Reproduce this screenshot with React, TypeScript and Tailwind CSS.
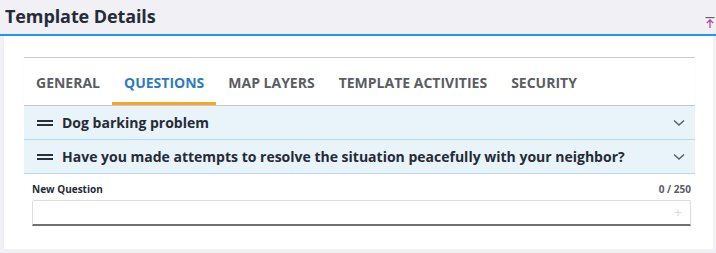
import React from "react";

const TABS = ["GENERAL", "QUESTIONS", "MAP LAYERS", "TEMPLATE ACTIVITIES", "SECURITY"];

const QUESTIONS = [
    "Dog barking problem",
    "Have you made attempts to resolve the situation peacefully with your neighbor?",
];

const Handle = () => (
    <svg width="16" height="8" viewBox="0 0 16 8" className="shrink-0">
        <rect x="0" y="1" width="16" height="2" fill="#2b3038" />
        <rect x="0" y="5" width="16" height="2" fill="#2b3038" />
    </svg>
);

const Chevron = () => (
    <svg width="12" height="8" viewBox="0 0 12 8" className="shrink-0">
        <path d="M1 1.5 L6 6 L11 1.5" fill="none" stroke="#5a5f66" strokeWidth="1.5" />
    </svg>
);

const App = () => {
    const active = 1;

    return (
        <div className="w-[716px] h-[253px] bg-[#f0f0f5] font-['Open_Sans',sans-serif] text-[#262b36] overflow-hidden">
            {/* Header */}
            <div className="h-[36px] flex items-start justify-between border-b-2 border-[#2196f3] pl-[5px] pr-[1px]">
                <h1 className="text-[18px] font-bold leading-none mt-[7px] tracking-[-0.1px]">Template Details</h1>
                <svg width="10" height="11" viewBox="0 0 10 11" className="mt-[17px]">
                    <rect x="0.5" y="0" width="9" height="1.2" fill="#6b6470" />
                    <path d="M5 3 V11 M1.8 6 L5 3 L8.2 6" fill="none" stroke="#b04aa8" strokeWidth="1.3" />
                </svg>
            </div>

            {/* Panel */}
            <div className="ml-1 mr-[3px] h-[213px] bg-white pt-[21px] pl-5 pr-[18px]">
                {/* Tabs */}
                <div className="border-t border-[#cccccc] pt-[1px]">
                    <div className="flex border-b border-[#c8c8c8] shadow-[0_1px_1px_rgba(0,0,0,0.08)]">
                        {TABS.map((t, i) => (
                            <div
                                key={t}
                                className={
                                    i === active
                                        ? "px-3 h-[46px] flex items-center border-b-[3px] border-[#f6a623] text-[#2e7bbf] text-[14px] font-bold pt-[3px]"
                                        : "px-3 h-[46px] flex items-center border-b-[3px] border-transparent text-[#5a5d63] text-[14px] font-bold pt-[3px]"
                                }
                            >
                                {t}
                            </div>
                        ))}
                    </div>
                </div>

                {/* Accordion */}
                <div className="bg-[#e8f3fa]">
                    {QUESTIONS.map((q) => (
                        <div key={q} className="h-[34px] flex items-center border-b border-[#b7d8f2] pl-[13px] pr-[10px]">
                            <Handle />
                            <span className="ml-[9px] text-[14px] font-bold text-[#262b36] flex-1">{q}</span>
                            <Chevron />
                        </div>
                    ))}
                </div>

                {/* New question */}
                <div className="pl-2 pr-1 pt-[8px]">
                    <div className="flex justify-between items-center h-[14px] text-[10px] font-bold">
                        <span className="text-[#262b36]">New Question</span>
                        <span className="text-[#5a5d63]">0 / 250</span>
                    </div>
                    <div className="mt-[4px] h-[26px] border border-[#dddddd] border-b-2 border-b-[#707070] rounded-t-[2px] flex items-center justify-end pr-[8px]">
                        <span className="text-[#d8d8d8] text-[14px] leading-none">+</span>
                    </div>
                </div>
            </div>
        </div>
    );
};

export default App;
